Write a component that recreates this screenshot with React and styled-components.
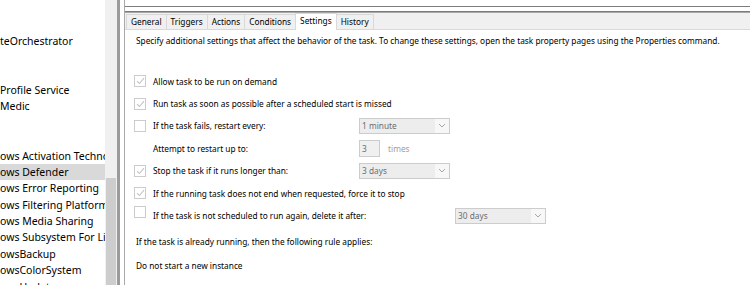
import React from 'react'
import styled, { createGlobalStyle } from 'styled-components'

const Global = createGlobalStyle`
  html, body { margin: 0; padding: 0; background: #fff; overflow: hidden; }
  #root { width: 750px; height: 285px; }
`

const Page = styled.div`
  display: flex;
  width: 750px;
  height: 285px;
  overflow: hidden;
  font-family: "Noto Sans", "Open Sans", sans-serif;
  color: #000;
`

const Tree = styled.div`
  width: 105px;
  flex: 0 0 105px;
  overflow: hidden;
  background: #fff;
  font-size: 10.5px;
`

const TreeRow = styled.div`
  height: 16.4px;
  line-height: 16.4px;
  white-space: nowrap;
  background: ${p => (p.$selected ? '#d9d9d9' : 'transparent')};
`

const Scrollbar = styled.div`
  flex: 0 0 12px;
  display: flex;
  flex-direction: column;
  background: #f0f0f0;
`

const Thumb = styled.div`
  margin-top: 178px;
  flex: 1;
  margin-left: 1px;
  margin-right: 1px;
  background: #cdcdcd;
`

const Splitter = styled.div`
  flex: 0 0 4px;
  background: #fff;
  border-left: 3px solid #9b9b9b;
  border-right: 1px solid #a9a9a9;
`

const Right = styled.div`
  flex: 1;
  display: flex;
  flex-direction: column;
  font-size: 8.3px;
  min-width: 0;
`

const TopBox = styled.div`
  height: 6px;
  border-bottom: 1px solid #7d7d7d;
`

const TopGap = styled.div`
  height: 4px;
  border-bottom: 1px solid #7a7a7a;
`

const TabStrip = styled.div`
  height: 16px;
  display: flex;
  align-items: flex-end;
  padding-left: 1px;
  background: #f0f0f0;
  border-top: 1px solid #a8a8a8;
  border-bottom: 1px solid #d9d9d9;
`

const Tab = styled.div`
  height: ${p => (p.$active ? '16px' : '14px')};
  line-height: ${p => (p.$active ? '13px' : '14px')};
  padding: 0 ${p => (p.$active ? 4 : 4)}px;
  margin-bottom: ${p => (p.$active ? '-1px' : '0')};
  background: ${p => (p.$active ? '#fff' : '#f0f0f0')};
  border: 1px solid #d9d9d9;
  border-bottom: none;
  margin-right: -1px;
  white-space: nowrap;
  position: relative;
  z-index: ${p => (p.$active ? 1 : 0)};
`

const Content = styled.div`
  flex: 1;
  padding-left: 9px;
  display: flex;
  flex-direction: column;
`

const Note = styled.div`
  margin-top: ${p => p.$top || 0}px;
  margin-left: 2px;
  line-height: 14px;
  white-space: nowrap;
`

const Options = styled.div`
  margin-top: 22px;
  display: flex;
  flex-direction: column;
`

const Row = styled.div`
  height: 22.4px;
  display: flex;
  align-items: center;
`

const Box = styled.div`
  flex: 0 0 10px;
  height: 10px;
  border: 1px solid #cccccc;
  background: #fff;
  margin-right: 7px;
  margin-bottom: ${p => (p.$raised ? '8px' : '0')};
  display: flex;
  align-items: center;
  justify-content: center;
`

const Spacer = styled.div`
  flex: 0 0 19px;
`

const Label = styled.div`
  flex: 0 0 ${p => p.$w}px;
  white-space: nowrap;
`

const Select = styled.div`
  width: 89px;
  height: 14px;
  border: 1px solid #cccccc;
  display: flex;
  color: #6d6d6d;
`

const SelectText = styled.div`
  flex: 1;
  background: #ededed;
  padding-left: 2px;
  line-height: 14px;
`

const SelectArrow = styled.div`
  flex: 0 0 14px;
  background: #f7f7f7;
  display: flex;
  align-items: center;
  justify-content: center;
`

const Field = styled.div`
  width: 17px;
  height: 15px;
  border: 1px solid #cccccc;
  background: #f0f0f0;
  color: #6d6d6d;
  padding-left: 2px;
  line-height: 15px;
`

const Muted = styled.span`
  margin-left: 8px;
  color: #a0a0a0;
`

const Check = () => (
  <svg width="9" height="8" viewBox="0 0 9 8">
    <path d="M1 4.2 L3.4 6.5 L8 1.2" fill="none" stroke="#c4c4c4" strokeWidth="1.1" />
  </svg>
)

const Chevron = () => (
  <svg width="8" height="5" viewBox="0 0 8 5">
    <path d="M1 1 L4 4 L7 1" fill="none" stroke="#a6a6a6" strokeWidth="1" />
  </svg>
)

const Dropdown = ({ value }) => (
  <Select>
    <SelectText>{value}</SelectText>
    <SelectArrow><Chevron /></SelectArrow>
  </Select>
)

const treeItems = [
  '', '', 'teOrchestrator', '', '', 'Profile Service', 'Medic', '', '',
  'ows Activation Technologies', 'ows Defender', 'ows Error Reporting',
  'ows Filtering Platform', 'ows Media Sharing', 'ows Subsystem For Linux',
  'owsBackup', 'owsColorSystem', 'owsUpdate',
]

const tabs = ['General', 'Triggers', 'Actions', 'Conditions', 'Settings', 'History']

const App = () => {
  return (
    <Page>
      <Global />
      <Tree>
        {treeItems.map((t, i) => (
          <TreeRow key={i} $selected={i === 10}>{t}</TreeRow>
        ))}
      </Tree>
      <Scrollbar><Thumb /></Scrollbar>
      <Splitter />
      <Right>
        <TopBox />
        <TopGap />
        <TabStrip>
          {tabs.map(t => (
            <Tab key={t} $active={t === 'Settings'}>{t}</Tab>
          ))}
        </TabStrip>
        <Content>
          <Note $top={4}>
            Specify additional settings that affect the behavior of the task. To change these settings, open the task property pages using the Properties command.
          </Note>
          <Options>
            <Row>
              <Box><Check /></Box>
              <Label $w={206}>Allow task to be run on demand</Label>
            </Row>
            <Row>
              <Box><Check /></Box>
              <Label $w={206}>Run task as soon as possible after a scheduled start is missed</Label>
            </Row>
            <Row>
              <Box />
              <Label $w={206}>If the task fails, restart every:</Label>
              <Dropdown value="1 minute" />
            </Row>
            <Row>
              <Spacer />
              <Label $w={206}>Attempt to restart up to:</Label>
              <Field>3</Field>
              <Muted>times</Muted>
            </Row>
            <Row>
              <Box><Check /></Box>
              <Label $w={206}>Stop the task if it runs longer than:</Label>
              <Dropdown value="3 days" />
            </Row>
            <Row>
              <Box><Check /></Box>
              <Label $w={206}>If the running task does not end when requested, force it to stop</Label>
            </Row>
            <Row>
              <Box $raised />
              <Label $w={302}>If the task is not scheduled to run again, delete it after:</Label>
              <Dropdown value="30 days" />
            </Row>
          </Options>
          <Note $top={8}>If the task is already running, then the following rule applies:</Note>
          <Note $top={10}>Do not start a new instance</Note>
        </Content>
      </Right>
    </Page>
  )
}

export default App
